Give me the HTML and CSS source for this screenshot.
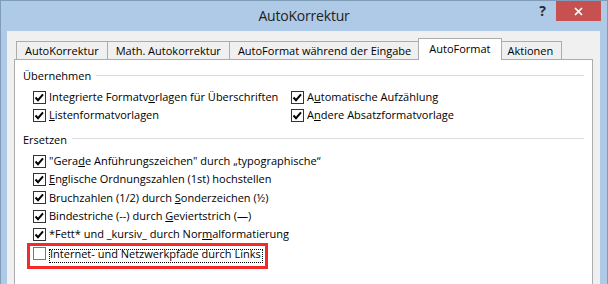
FILE: index.html
```html
<!DOCTYPE html>
<html lang="de">
<head>
    <meta charset="UTF-8">
    <title>AutoKorrektur</title>
    <link rel="stylesheet" href="styles.css">
</head>
<body>
    <div class="window">
        <div class="titlebar">
            <span class="title">AutoKorrektur</span>
            <div class="caption">
                <span class="help">?</span>
                <span class="close">
                    <svg width="9" height="9" viewBox="0 0 9 9"><path d="M1 1 L8 8 M8 1 L1 8" stroke="#fff" stroke-width="1.7" fill="none"/></svg>
                </span>
            </div>
        </div>

        <div class="client">
            <div class="tabs">
                <div class="tab">AutoKorrektur</div>
                <div class="tab">Math. Autokorrektur</div>
                <div class="tab">AutoFormat während der Eingabe</div>
                <div class="tab active">AutoFormat</div>
                <div class="tab">Aktionen</div>
            </div>

            <div class="panel">
                <div class="group-title">Übernehmen</div>
                <div class="options cols">
                    <label class="option">
                        <svg class="box" width="13" height="13" viewBox="0 0 13 13"><rect x="0.5" y="0.5" width="12" height="12" fill="#fff" stroke="#333"/><path d="M2.5 6.5 L5 9.2 L10 3.4" stroke="#000" stroke-width="2" fill="none"/></svg>
                        <span>Integrierte Formatv<u>o</u>rlagen für Überschriften</span>
                    </label>
                    <label class="option">
                        <svg class="box" width="13" height="13" viewBox="0 0 13 13"><rect x="0.5" y="0.5" width="12" height="12" fill="#fff" stroke="#333"/><path d="M2.5 6.5 L5 9.2 L10 3.4" stroke="#000" stroke-width="2" fill="none"/></svg>
                        <span>A<u>u</u>tomatische Aufzählung</span>
                    </label>
                    <label class="option">
                        <svg class="box" width="13" height="13" viewBox="0 0 13 13"><rect x="0.5" y="0.5" width="12" height="12" fill="#fff" stroke="#333"/><path d="M2.5 6.5 L5 9.2 L10 3.4" stroke="#000" stroke-width="2" fill="none"/></svg>
                        <span><u>L</u>istenformatvorlagen</span>
                    </label>
                    <label class="option">
                        <svg class="box" width="13" height="13" viewBox="0 0 13 13"><rect x="0.5" y="0.5" width="12" height="12" fill="#fff" stroke="#333"/><path d="M2.5 6.5 L5 9.2 L10 3.4" stroke="#000" stroke-width="2" fill="none"/></svg>
                        <span>A<u>n</u>dere Absatzformatvorlage</span>
                    </label>
                </div>

                <div class="group-title">Ersetzen</div>
                <div class="options">
                    <label class="option">
                        <svg class="box" width="13" height="13" viewBox="0 0 13 13"><rect x="0.5" y="0.5" width="12" height="12" fill="#fff" stroke="#333"/><path d="M2.5 6.5 L5 9.2 L10 3.4" stroke="#000" stroke-width="2" fill="none"/></svg>
                        <span>"Gera<u>d</u>e Anführungszeichen" durch „typographische“</span>
                    </label>
                    <label class="option">
                        <svg class="box" width="13" height="13" viewBox="0 0 13 13"><rect x="0.5" y="0.5" width="12" height="12" fill="#fff" stroke="#333"/><path d="M2.5 6.5 L5 9.2 L10 3.4" stroke="#000" stroke-width="2" fill="none"/></svg>
                        <span><u>E</u>nglische Ordnungszahlen (1st) hochstellen</span>
                    </label>
                    <label class="option">
                        <svg class="box" width="13" height="13" viewBox="0 0 13 13"><rect x="0.5" y="0.5" width="12" height="12" fill="#fff" stroke="#333"/><path d="M2.5 6.5 L5 9.2 L10 3.4" stroke="#000" stroke-width="2" fill="none"/></svg>
                        <span>Bruchzahlen (1/2) durch <u>S</u>onderzeichen (½)</span>
                    </label>
                    <label class="option">
                        <svg class="box" width="13" height="13" viewBox="0 0 13 13"><rect x="0.5" y="0.5" width="12" height="12" fill="#fff" stroke="#333"/><path d="M2.5 6.5 L5 9.2 L10 3.4" stroke="#000" stroke-width="2" fill="none"/></svg>
                        <span>Bindestriche (--) durch <u>G</u>eviertstrich (—)</span>
                    </label>
                    <label class="option">
                        <svg class="box" width="13" height="13" viewBox="0 0 13 13"><rect x="0.5" y="0.5" width="12" height="12" fill="#fff" stroke="#333"/><path d="M2.5 6.5 L5 9.2 L10 3.4" stroke="#000" stroke-width="2" fill="none"/></svg>
                        <span>*Fett* und _kursiv_ durch Nor<u>m</u>alformatierung</span>
                    </label>
                    <label class="option marked">
                        <svg class="box" width="13" height="13" viewBox="0 0 13 13"><rect x="0.5" y="0.5" width="12" height="12" fill="#fff" stroke="#777"/></svg>
                        <span class="focus">Internet- und Netzwerkpfade durch Links</span>
                    </label>
                </div>
            </div>
        </div>
    </div>
</body>
</html>
```

FILE: styles.css
```css
body {
    margin: 0;
    font-family: "Open Sans", "Noto Sans", sans-serif;
    color: #000;
}

.window {
    width: 608px;
    height: 284px;
    box-sizing: border-box;
    border: 1px solid #7f9db9;
    border-bottom: none;
    background: #aecae7;
    display: flex;
    flex-direction: column;
    overflow: hidden;
}

.titlebar {
    height: 30px;
    flex: none;
    display: grid;
    grid-template-columns: 1fr auto 1fr;
}

.title {
    grid-column: 2;
    font-size: 14px;
    letter-spacing: -0.2px;
    line-height: 30px;
    color: #222;
}

.caption {
    grid-column: 3;
    justify-self: end;
    display: flex;
    align-items: flex-start;
    gap: 10px;
    margin-right: 6px;
}

.help {
    font-size: 14px;
    font-weight: bold;
    line-height: 20px;
    color: #2b2b2b;
}

.close {
    width: 45px;
    height: 20px;
    background: #c75050;
    display: flex;
    align-items: center;
    justify-content: center;
}

.client {
    flex: 1;
    margin: 0 7px 0 6px;
    padding: 7px 7px 0;
    background: #f0f0f0;
}

.tabs {
    display: flex;
    align-items: flex-end;
    height: 21px;
    padding-left: 2px;
}

.tab {
    height: 18px;
    box-sizing: border-box;
    border: 1px solid #acacac;
    border-bottom: none;
    margin-left: -1px;
    padding: 0 8px;
    font-size: 11px;
    line-height: 17px;
    background: #f0f0f0;
    white-space: nowrap;
}

.tab:first-child {
    margin-left: 0;
}

.tab.active {
    height: 22px;
    margin: 0 -2px -1px;
    padding: 0 10px;
    line-height: 19px;
    background: #fff;
    position: relative;
    z-index: 1;
}

.panel {
    height: 300px;
    border: 1px solid #acacac;
    background: #fff;
    padding: 8px 8px 0;
}

.group-title {
    display: flex;
    align-items: center;
    gap: 5px;
    font-size: 11px;
    line-height: 16px;
}

.group-title::after {
    content: "";
    flex: 1;
    height: 1px;
    margin-bottom: 2px;
    background: #dcdcdc;
}

.options {
    display: grid;
    justify-items: start;
    margin: 4px 0 7px 10px;
}

.options.cols {
    grid-template-columns: 258px auto;
}

.option {
    display: flex;
    align-items: center;
    gap: 3px;
    min-height: 18.4px;
    font-size: 11px;
    line-height: 18.4px;
    white-space: nowrap;
}

.box {
    flex: none;
}

.option.marked {
    position: relative;
}

.option.marked::after {
    content: "";
    position: absolute;
    top: -1px;
    bottom: -7px;
    left: -6px;
    right: -5px;
    border: 3px solid #f42a2a;
}

.focus {
    align-self: flex-end;
    margin-bottom: -1px;
    border: 1px dotted #000;
    padding: 0 1px 4px 0;
    line-height: 8px;
}
```
